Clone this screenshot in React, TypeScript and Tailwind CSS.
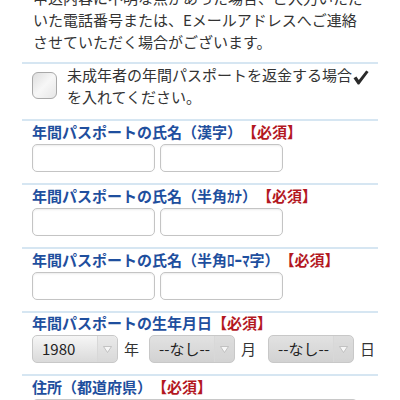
import React from 'react';

function Required() {
    return <span className="text-[#b3181f]">【必須】</span>;
}

function Label({ children }: { children: React.ReactNode }) {
    return (
        <div className="text-[15px] leading-[20px] font-bold text-[#1f4f9e] whitespace-nowrap [text-spacing-trim:space-all]">
            {children}
            <Required />
        </div>
    );
}

function NameField({ title }: { title: string }) {
    return (
        <div className="border-t-2 border-[#d6e6f2] pt-[1px] pl-[10px] pb-[11px]">
            <Label>{title}</Label>
            <div className="mt-[2px] flex gap-[5px]">
                <div className="w-[123px] h-[28px] rounded-[5px] border border-[#c4c4c4] bg-white shadow-[inset_0_1px_2px_rgba(0,0,0,0.08)]" />
                <div className="w-[123px] h-[28px] rounded-[5px] border border-[#c4c4c4] bg-white shadow-[inset_0_1px_2px_rgba(0,0,0,0.08)]" />
            </div>
        </div>
    );
}

function Select({ value, dim }: { value: string; dim?: boolean }) {
    return (
        <div
            className={
                dim
                    ? 'flex w-[86px] h-[28px] rounded-[5px] border border-[#c8c8c8] bg-linear-to-b from-[#e2e2e2] to-[#d2d2d2]'
                    : 'flex w-[86px] h-[28px] rounded-[5px] border border-[#c8c8c8] bg-linear-to-b from-[#f6f6f6] to-[#dadada]'
            }
        >
            <span className="flex-1 pl-[9px] text-[15px] leading-[26px] text-[#222] whitespace-nowrap">{value}</span>
            <div className="w-[20px] flex items-center justify-center border-l border-[#d8d8d8] bg-[#d6d6d6]/40 rounded-r-[5px]">
                <svg width="9" height="7" viewBox="0 0 9 7">
                    <path d="M0.5 0.5 L8.5 0.5 L4.5 6.5 Z" fill="#f7f7f7" stroke="#b8b8b8" strokeWidth="0.8" />
                </svg>
            </div>
        </div>
    );
}

export default function App() {
    return (
        <div className="w-[400px] h-[400px] overflow-hidden bg-white text-[#333] font-['Noto_Sans_CJK_JP',sans-serif] [text-spacing-trim:space-all]">
            <div className="mx-[22px]">
                {/* Notice */}
                <div className="-mt-[13px] pl-[11px] pb-[9px] text-[15px] leading-[22px] whitespace-nowrap">
                    <p>申込内容に不明な点があった場合、ご入力いただ</p>
                    <p>いた電話番号または、Eメールアドレスへご連絡</p>
                    <p>させていただく場合がございます。</p>
                </div>

                {/* Minor refund checkbox */}
                <div className="border-t-2 border-[#d6e6f2] flex items-start pl-[10px] pb-[11px]">
                    <div className="mt-[8px] w-[25px] h-[27px] shrink-0 rounded-[6px] border border-[#a9a9a9] bg-linear-to-br from-[#dedede] via-[#f7f7f7] to-[#e6e6e6]" />
                    <div className="ml-[10px] text-[15px] leading-[22px] whitespace-nowrap">
                        <p className="flex items-center">
                            未成年者の年間パスポートを返金する場合
                            <svg width="16" height="15" viewBox="0 0 16 15" className="ml-[1px] mt-[4px]">
                                <path d="M0.5 8.2 L3.4 6.4 L5.8 10 L13.2 0.4 L15.6 2 L6.2 14.6 L4.8 14.6 Z" fill="#2a2a2a" />
                            </svg>
                        </p>
                        <p>を入れてください。</p>
                    </div>
                </div>

                <NameField title="年間パスポートの氏名（漢字）" />
                <NameField title="年間パスポートの氏名（半角ｶﾅ）" />
                <NameField title="年間パスポートの氏名（半角ﾛｰﾏ字）" />

                {/* Birthday */}
                <div className="border-t-2 border-[#d6e6f2] pl-[10px] pb-[11px]">
                    <Label>年間パスポートの生年月日</Label>
                    <div className="mt-[2px] flex items-center text-[15px]">
                        <Select value="1980" />
                        <span className="ml-[6px] mr-[10px]">年</span>
                        <Select value="--なし--" dim />
                        <span className="ml-[6px] mr-[12px]">月</span>
                        <Select value="--なし--" dim />
                        <span className="ml-[6px]">日</span>
                    </div>
                </div>

                {/* Prefecture */}
                <div className="border-t-2 border-[#d6e6f2] pt-[1px] pl-[10px]">
                    <Label>住所（都道府県）</Label>
                    <div className="mt-[2px] w-[326px] h-[28px] rounded-[5px] border border-[#c8c8c8] bg-linear-to-b from-[#f6f6f6] to-[#dadada]" />
                </div>
            </div>
        </div>
    );
}
